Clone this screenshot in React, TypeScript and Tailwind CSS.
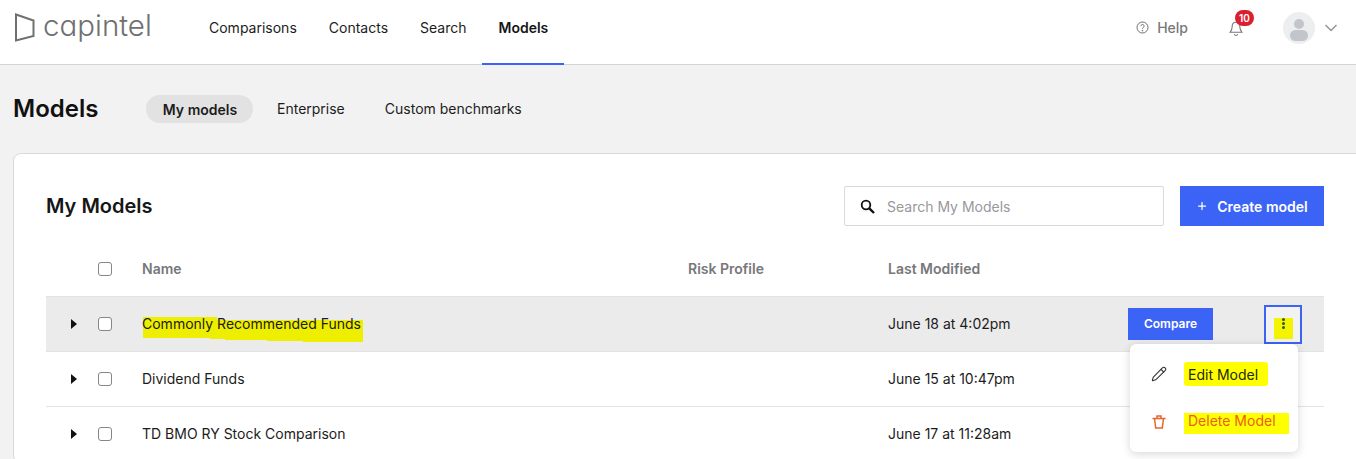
import { ChevronDown, Pencil, Plus } from "lucide-react";

const navItems = ["Comparisons", "Contacts", "Search", "Models"];

const rows = [
  { name: "Commonly Recommended Funds", modified: "June 18 at 4:02pm", active: true },
  { name: "Dividend Funds", modified: "June 15 at 10:47pm", active: false },
  { name: "TD BMO RY Stock Comparison", modified: "June 17 at 11:28am", active: false },
];

function Logo() {
  return (
    <div className="flex items-center gap-[8px] w-[193px] pl-[15px] pb-[10px]">
      <svg width="20" height="29" viewBox="0 0 20 29" fill="none" className="shrink-0">
        <path d="M1 1.500 L18.500 7.500 V23 L1 27.500 Z" stroke="#707070" strokeWidth="2" />
      </svg>
      <span className="text-[29.5px] leading-none font-light text-[#707070] [font-feature-settings:'cv11'] -mt-[2px]">
        capintel
      </span>
    </div>
  );
}

function Header() {
  return (
    <header className="h-[65px] shrink-0 bg-white border-b border-[#d4d4d4] flex items-stretch">
      <Logo />
      <nav className="flex items-stretch">
        {navItems.map((item) => (
          <div
            key={item}
            className={`px-4 flex items-center text-[14px] -mb-[1px] border-b-2 pb-[9px] ${
              item === "Models" ? "font-semibold text-[#161616] border-[#3b63f6]" : "text-[#1c1c1c] border-transparent"
            }`}
          >
            {item}
          </div>
        ))}
      </nav>
      <div className="ml-auto flex items-center pr-[15px] pb-[9px]">
        <div className="flex items-center gap-[8px] text-[14px] font-medium text-[#77777c] mr-[40px]">
          <svg width="13" height="13" viewBox="0 0 13 13" fill="none" stroke="#6f6f74" strokeWidth="1">
            <circle cx="6.500" cy="6.500" r="5.500" />
            <path d="M4.900 5.100a1.600 1.600 0 1 1 2.400 1.400c-.5.3-.8.6-.8 1.200" />
            <circle cx="6.500" cy="9.600" r=".4" />
          </svg>
          Help
        </div>
        <div className="relative mr-[39px] w-[16px] h-[16px] mt-[2px]">
          <svg width="16" height="16" viewBox="0 0 16 18" fill="none" stroke="#77777c" strokeWidth="1.200">
            <path d="M8 1.500c-2.800 0-4.300 2-4.300 4.600 0 3.500-1 5-2.400 6.600h13.400c-1.400-1.600-2.400-3.100-2.400-6.600 0-2.600-1.500-4.600-4.300-4.600Z" />
            <path d="M6 14.800c.4 1 1.100 1.500 2 1.500s1.600-.5 2-1.500" />
          </svg>
          <span className="absolute -top-[11px] left-[7px] w-[19px] h-[16px] rounded-full bg-[#dc1f2e] text-white text-[10px] font-semibold leading-[16px] text-center">
            10
          </span>
        </div>
        <div className="w-[32px] h-[32px] rounded-full bg-[#eceef0] overflow-hidden flex flex-col items-center mr-[6px]">
          <span className="w-[10px] h-[10px] rounded-full bg-[#c2c5c9] mt-[7px]" />
          <span className="w-[18px] h-[11px] rounded-full bg-[#c2c5c9] mt-[1px]" />
        </div>
        <ChevronDown size={20} color="#9a9a9f" strokeWidth={2} />
      </div>
    </header>
  );
}

function Checkbox() {
  return <span className="block w-[14px] h-[14px] rounded-[3px] border border-[#85858a] bg-white" />;
}

function Row({ name, modified, active }: { name: string; modified: string; active: boolean }) {
  return (
    <div className={`h-[55px] shrink-0 flex items-center border-b border-[#e3e3e3] text-[14px] text-[#1c1c1c] ${active ? "bg-[#ebebeb]" : "bg-white"}`}>
      <span className="ml-[25px] w-0 h-0 border-y-[5px] border-y-transparent border-l-[6px] border-l-[#111111]" />
      <span className="ml-[21px]">
        <Checkbox />
      </span>
      <span className="ml-[30px] w-[746px] relative pb-[1px]">
        {active && (
          <svg className="absolute left-[1px] top-[4px]" width="221" height="26" viewBox="0 0 221 26">
            <path d="M0 0H74V3H220V25H160V24H124V23H82V22H67V21H0Z" fill="#eeee00" />
          </svg>
        )}
        <span className="relative">{name}</span>
      </span>
      <span className="pb-[1px]">{modified}</span>
      {active && (
        <div className="ml-auto flex items-center relative">
          <button className="w-[85px] h-[32px] bg-[#3b63f6] text-white text-[12px] font-semibold">Compare</button>
          <div className="ml-[51px] mr-[22px] w-[38px] h-[39px] border-2 border-[#3b63f6] bg-[#f2f2f2] flex items-start justify-center">
            <span className="mt-[11px] w-[19px] h-[21px] bg-[#f4f400] flex flex-col items-center gap-[1px]">
              <i className="w-[3px] h-[3px] rounded-full bg-[#2c5a1c]" />
              <i className="w-[3px] h-[3px] rounded-full bg-[#2c5a1c]" />
              <i className="w-[3px] h-[3px] rounded-full bg-[#2c5a1c]" />
            </span>
          </div>
          <Menu />
        </div>
      )}
    </div>
  );
}

function Menu() {
  return (
    <div className="absolute z-10 top-[39px] right-[26px] w-[168px] h-[108px] bg-white rounded-[6px] shadow-[0_2px_10px_rgba(0,0,0,0.16)] text-[14px] pt-[18px] pl-[21px]">
      <div className="flex items-center h-[24px]">
        <Pencil size={16} color="#333333" strokeWidth={1.600} />
        <span className="ml-[17px] w-[84px] h-[24px] pl-[4px] pt-[1px] flex items-center rounded-[3px] bg-[#ffff00] text-[#23290c]">Edit Model</span>
      </div>
      <div className="flex items-center h-[21px] mt-[27px]">
        <svg width="16" height="16" viewBox="0 0 16 16" fill="none" stroke="#e8652a" strokeWidth="1.500" className="-mt-[3px]">
          <path d="M1.500 4.500h13M6 4.200V2h4v2.200M3.500 4.500l1.200 9.500h6.600l1.200-9.500" />
        </svg>
        <span className="ml-[17px] w-[105px] h-[21px] pl-[4px] pb-[5px] flex items-center bg-[#ffff00] text-[#ea5f1c]">Delete Model</span>
      </div>
    </div>
  );
}

export default function App() {
  return (
    <div className="h-[459px] overflow-hidden bg-[#f2f2f2] flex flex-col font-['Inter',sans-serif]">
      <Header />
      <div className="h-[88px] shrink-0 flex items-center pl-[13px]">
        <h1 className="text-[24px] font-semibold text-[#111111] w-[133px]">Models</h1>
        <div className="flex items-center text-[14px] text-[#1c1c1c]">
          <span className="h-[28px] w-[107px] rounded-full bg-[#e2e2e2] flex items-center justify-center font-semibold pl-[1px]">My models</span>
          <span className="ml-[24px] pb-[1px]">Enterprise</span>
          <span className="ml-[40px] pb-[1px]">Custom benchmarks</span>
        </div>
      </div>
      <main className="ml-[13px] -mr-[20px] flex-1 bg-white border border-[#d9d9d9] rounded-[8px] pl-[32px] pr-[51px] pt-[32px]">
        <div className="flex items-center h-[40px]">
          <h2 className="text-[20px] font-semibold text-[#161616]">My Models</h2>
          <div className="ml-auto w-[320px] h-[40px] border border-[#d9d9d9] rounded-[2px] flex items-center pl-[15px] text-[14px] text-[#98989d]">
            <svg width="15" height="15" viewBox="0 0 15 15" fill="none" stroke="#111111">
              <circle cx="6" cy="6" r="4.300" strokeWidth="1.800" />
              <path d="M9.300 9.300 14 14" strokeWidth="2.400" />
            </svg>
            <span className="ml-[12px]">Search My Models</span>
          </div>
          <button className="ml-[16px] w-[144px] h-[40px] bg-[#3b63f6] text-white text-[14px] font-semibold flex items-center justify-center gap-[9px]">
            <Plus size={12} strokeWidth={2.500} />
            Create model
          </button>
        </div>
        <div className="h-[71px] flex items-center border-b border-[#e3e3e3] text-[14px] font-semibold text-[#77777c] pt-[15px]">
          <span className="ml-[52px]">
            <Checkbox />
          </span>
          <span className="ml-[30px] w-[546px]">Name</span>
          <span className="w-[200px]">Risk Profile</span>
          <span>Last Modified</span>
        </div>
        {rows.map((row) => (
          <Row key={row.name} {...row} />
        ))}
      </main>
    </div>
  );
}
